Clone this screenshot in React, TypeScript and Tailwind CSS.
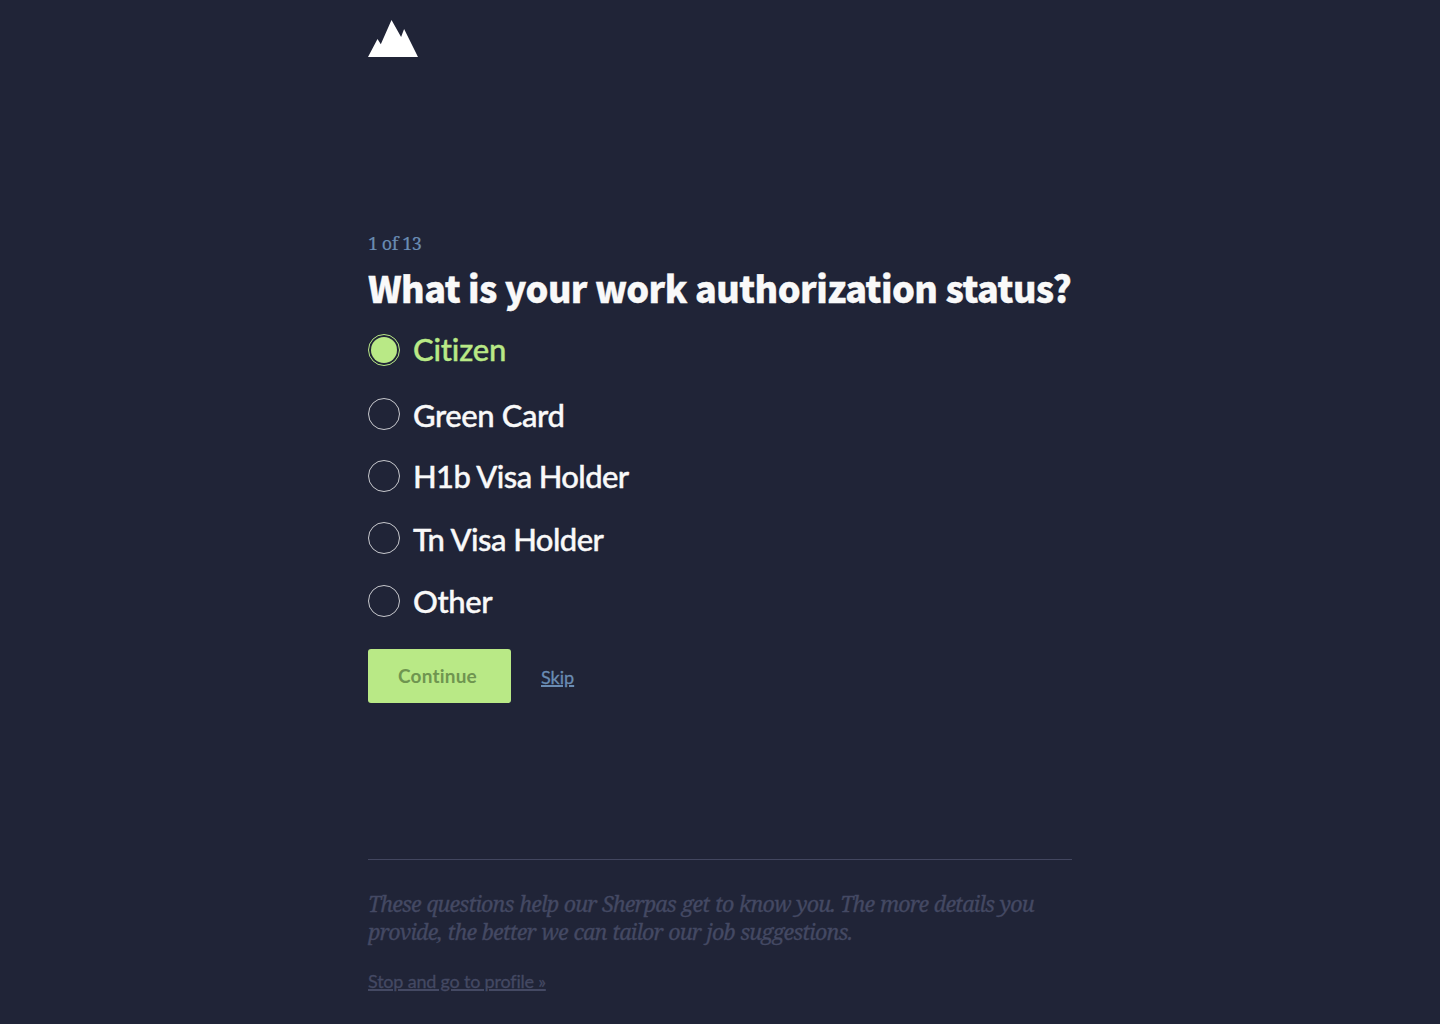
import React from "react";

const options = [
  { label: "Citizen", selected: true, row: "h-[64px]", text: "pt-0 tracking-[-0.2px]" },
  { label: "Green Card", selected: false, row: "h-[62px]", text: "pt-[2px] tracking-[-0.4px]" },
  { label: "H1b Visa Holder", selected: false, row: "h-[62px]", text: "pt-[1px] tracking-[-0.62px]" },
  { label: "Tn Visa Holder", selected: false, row: "h-[63px]", text: "pt-[2px] tracking-[-0.55px]" },
  { label: "Other", selected: false, row: "h-[64px]", text: "pt-[1px] tracking-[-0.4px]" },
];

function Logo() {
  return (
    <svg width="50" height="37" viewBox="0 0 50 37" className="block" aria-label="Home">
      <path d="M0 37 L9.5 19 L12.8 24.2 L23.5 0 L33.1 17 L36.1 9 L50 37 Z" fill="#fff" />
    </svg>
  );
}

export default function App() {
  return (
    <div className="h-[1024px] overflow-hidden bg-[#202437] font-['Lato',sans-serif] text-[#f9f9f9]">
      <main className="mx-auto w-[704px] pt-5">
        <Logo />
        <p className="mt-[174px] whitespace-nowrap font-['Noto_Serif','Liberation_Serif',serif] text-[18px] leading-6 tracking-[-0.45px] text-[#6a8cb3] [-webkit-text-stroke:0.2px_currentColor]">1 of 13</p>
        <h1 className="mt-2 whitespace-nowrap font-['Noto_Sans_CJK_SC',sans-serif] text-[36px] font-black leading-[48px] tracking-[-0.58px] [word-spacing:0.3px] [-webkit-text-stroke:0.3px_currentColor]">
          What is your work authorization status?
        </h1>
        <div className="mt-[23px]">
          {options.map((o) => (
            <label key={o.label} className={`flex items-start gap-[13px] ${o.row}`}>
              <span className={`flex size-8 shrink-0 items-center justify-center rounded-full border ${o.selected ? "border-[#b9e986]" : "border-white/75"}`}>
                {o.selected && <span className="size-[26px] rounded-full bg-[#b9e986]" />}
              </span>
              <span className={`-mt-px whitespace-nowrap text-[31px] font-medium leading-8 [-webkit-text-stroke:0.4px_currentColor] ${o.text} ${o.selected ? "text-[#b9e986]" : ""}`}>{o.label}</span>
            </label>
          ))}
        </div>
        <div className="flex h-[54px] items-center gap-[30px]">
          <button className="h-[54px] w-[143px] rounded-[3px] bg-[#b9e986] pr-1 text-[19px] font-bold tracking-[0.2px] text-[#6f9550]">Continue</button>
          <a className="pt-0.5 text-[18px] text-[#6a8cb3] underline decoration-2 underline-offset-1 [-webkit-text-stroke:0.3px_currentColor]">Skip</a>
        </div>
        <footer className="mt-[156px] border-t border-[#42465f] pt-[30px]">
          <p className="whitespace-nowrap font-['Noto_Serif','Liberation_Serif',serif] text-[21.5px] italic leading-7 tracking-[-0.88px] text-[#444963] [word-spacing:0.9px] [-webkit-text-stroke:0.3px_currentColor]">
            These questions help our Sherpas get to know you. The more details you<br />
            provide, the better we can tailor our job suggestions.
          </p>
          <a className="mt-[23px] inline-block text-[18px] leading-6 tracking-[-0.2px] text-[#444963] underline decoration-2 underline-offset-1 [-webkit-text-stroke:0.3px_currentColor]">Stop and go to profile »</a>
        </footer>
      </main>
    </div>
  );
}
